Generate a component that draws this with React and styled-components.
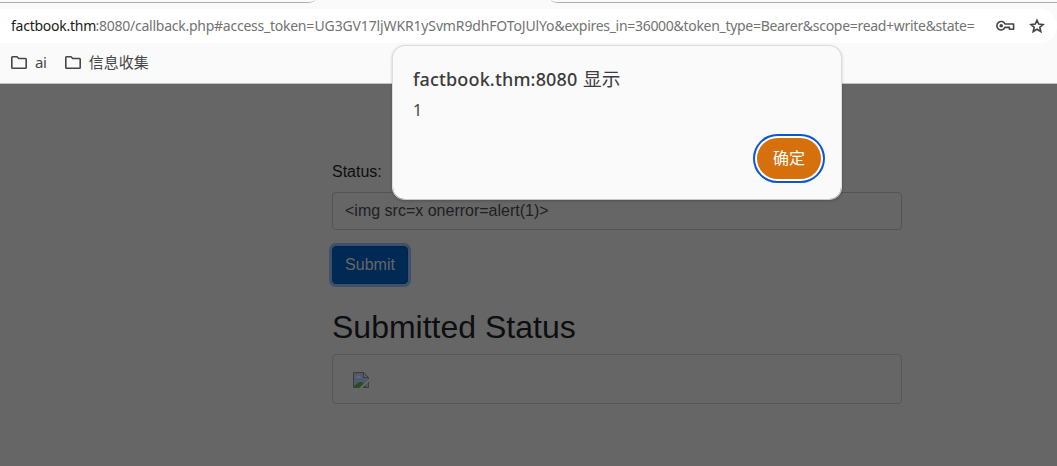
import React from "react";
import styled, { createGlobalStyle } from "styled-components";

const Global = createGlobalStyle`
  *, *::before, *::after { box-sizing: border-box; }
  body { margin: 0; overflow: hidden; }
`;

const uiFont = `"Noto Sans", "Noto Sans CJK SC", sans-serif`;

const Window = styled.div`
  position: relative;
  display: flex;
  flex-direction: column;
  width: 1057px;
  height: 466px;
  overflow: hidden;
  background: #fafafa;
  font-family: ${uiFont};
`;

const TabStrip = styled.div`
  display: flex;
  justify-content: space-between;
  flex: none;
  height: 9px;
`;

const TabEdge = styled.div`
  width: ${(p) => p.$width}px;
  height: 3px;
  border-bottom: 1px solid #adadad;
  border-radius: ${(p) => (p.$side === "left" ? "0 0 8px 0 / 0 0 3px 0" : "0 0 0 8px / 0 0 0 3px")};
`;

const AddressBar = styled.div`
  display: flex;
  align-items: center;
  flex: none;
  height: 34px;
  margin-left: -14px;
  padding: 0 12px 0 25px;
  border-radius: 17px;
  background: #fff;
`;

const Url = styled.div`
  display: flex;
  flex: 1;
  font-size: 14px;
  line-height: 20px;
  white-space: nowrap;
`;

const UrlPart = styled.span`
  flex: none;
  width: ${(p) => p.$width}px;
  color: ${(p) => (p.$host ? "#1b1b1b" : "#737373")};
  letter-spacing: ${(p) => p.$spacing}px;
`;

const BarIcon = styled.svg`
  flex: none;
  display: block;
  margin-left: ${(p) => p.$gap || 0}px;
`;

const Bookmarks = styled.div`
  display: flex;
  align-items: center;
  flex: none;
  gap: 18px;
  height: 41px;
  padding: 0 11px 2px;
  border-bottom: 1px solid #c4c4c4;
`;

const Bookmark = styled.div`
  display: flex;
  align-items: center;
  gap: 8px;
  color: #474747;
  font-size: 15px;
  line-height: 20px;
  letter-spacing: ${(p) => p.$spacing || 0}px;
`;

const Page = styled.main`
  flex: 1;
  padding: 76px 155px 0 332px;
  background: #666;
  color: #0d0e10;
  font-family: "Liberation Sans", sans-serif;
  font-size: 16px;
  line-height: 24px;
`;

const Form = styled.div`
  display: flex;
  flex-direction: column;
  align-items: flex-start;
`;

const Label = styled.label`
  margin-bottom: 8px;
`;

const Field = styled.div`
  width: 570px;
  height: 38px;
  padding: 6px 12px;
  border: 1px solid #525456;
  border-radius: 4px;
  color: #1d2022;
`;

const Submit = styled.button`
  width: 76px;
  height: 38px;
  margin: 16px 0 24px;
  padding: 6px 0;
  border: 1px solid #002549;
  border-radius: 4px;
  background: #002a54;
  box-shadow: 0 0 0 3px #3d526a;
  color: #666;
  font: inherit;
`;

const Heading = styled.h2`
  margin: 0 0 8px;
  font-size: 32px;
  font-weight: 400;
  line-height: 38px;
`;

const Result = styled.div`
  width: 570px;
  height: 50px;
  padding: 17px 20px;
  border: 1px solid #585858;
  border-radius: 4px;
`;

const Dialog = styled.section`
  position: absolute;
  left: 392px;
  top: 45px;
  display: flex;
  flex-direction: column;
  width: 450px;
  height: 155px;
  padding: 20px 20px;
  border: 1px solid #dedede;
  border-bottom-color: #c8c8c8;
  border-radius: 13px;
  background: #fafafa;
  background-clip: padding-box;
  box-shadow: 0 1px 3px rgba(0, 0, 0, 0.22);
`;

const DialogTitle = styled.div`
  display: flex;
  gap: 5px;
  color: #3c3c3c;
  font-size: 18px;
  line-height: 24px;
`;

const Origin = styled.span`
  width: 165px;
  padding-top: 1px;
  font-weight: 500;
  letter-spacing: ${(p) => p.$spacing}px;
  white-space: nowrap;
`;

const Verb = styled.span`
  font-family: "Noto Sans CJK SC", sans-serif;
  font-size: 18.7px;
  white-space: nowrap;
`;

const Message = styled.div`
  margin-top: 9px;
  color: #464646;
  font-size: 16px;
  line-height: 20px;
`;

const Confirm = styled.button`
  align-self: flex-end;
  flex: none;
  width: 64px;
  height: 41px;
  margin: 18px 0 0;
  padding: 0 0 3px;
  border: 0;
  border-radius: 20.5px;
  background: #d5700d;
  box-shadow: 0 0 0 2px #fff, 0 0 0 4px #0b57d0;
  color: #fff;
  font-family: "Noto Sans CJK SC", sans-serif;
  font-size: 16px;
`;

function FolderIcon() {
  return (
    <svg width="16" height="13" viewBox="0 0 16 13" fill="none" stroke="#474747" strokeWidth="1.6" strokeLinejoin="round">
      <path d="M.8 1.5Q.8.8 1.5.8H6l1.7 1.7h6.8q.7 0 .7.7v8.3q0 .7-.7.7h-13q-.7 0-.7-.7z" />
    </svg>
  );
}

function KeyIcon() {
  return (
    <BarIcon width="19" height="12" viewBox="0 0 19 12" fill="none" stroke="#454545" strokeWidth="1.6">
      <path d="M9 4H17.6V9.2H13.4V7.4H9A4.25 4.25 0 1 1 9 4z" strokeLinejoin="round" />
      <circle cx="5.2" cy="5.8" r="1.8" fill="#454545" stroke="none" />
    </BarIcon>
  );
}

function StarIcon() {
  return (
    <BarIcon $gap={14} width="16" height="16" viewBox="0 0 16 16" fill="none" stroke="#454545" strokeWidth="1.6">
      <path d="M8 2.2 9.7 6.1 14 6.5 10.8 9.3 11.8 13.5 8 11.2 4.2 13.5 5.2 9.3 2 6.5 6.3 6.1z" />
    </BarIcon>
  );
}

function BrokenImageIcon() {
  return (
    <svg width="16" height="16" viewBox="0 0 16 16" style={{ display: "block" }}>
      <path d="M.5.5H10.5L15.5 5.5V15.5H.5z" fill="#505969" />
      <path d="M2.5 5.5q0-1 1.2-1 .6-1.5 2-1 1.2 0 1.3 1.2 1.5 0 1.5 1.3H2.5z" fill="#666a70" />
      <path d="M1 15.5v-1Q5 9.7 8.2 10q2.7.4 5.3 5.5z" fill="#25501c" />
      <path d="M.5 15.5V.5H10.5L15.5 5.5M.5 15.5H15.5V5.5" fill="none" stroke="#3c3e3e" />
      <path d="M10.5.5v5h5z" fill="#606262" stroke="#3c3e3e" />
      <path d="M16 6.5v3L9.5 16H6.2z" fill="#666" />
    </svg>
  );
}

export default function App() {
  return (
    <Window>
      <Global />
      <TabStrip>
        <TabEdge $side="left" $width={315} />
        <TabEdge $side="right" $width={506} />
      </TabStrip>
      <AddressBar>
        <Url>
          <UrlPart $host $width={84.5} $spacing={-0.25}>factbook.thm</UrlPart>
          <UrlPart $width={219} $spacing={-0.25}>:8080/callback.php#access_token=</UrlPart>
          <UrlPart $width={240} $spacing={-0.14}>UG3GV17ljWKR1ySvmR9dhFOToJUlYo</UrlPart>
          <UrlPart $width={419} $spacing={-0.3}>&amp;expires_in=36000&amp;token_type=Bearer&amp;scope=read+write&amp;state=</UrlPart>
        </Url>
        <KeyIcon />
        <StarIcon />
      </AddressBar>
      <Bookmarks>
        <Bookmark $spacing={-0.3}><FolderIcon />ai</Bookmark>
        <Bookmark><FolderIcon />信息收集</Bookmark>
      </Bookmarks>
      <Page>
        <Form>
          <Label>Status:</Label>
          <Field>&lt;img src=x onerror=alert(1)&gt;</Field>
          <Submit>Submit</Submit>
        </Form>
        <Heading>Submitted Status</Heading>
        <Result><BrokenImageIcon /></Result>
      </Page>
      <Dialog>
        <DialogTitle>
          <Origin $spacing={0.15}>factbook.thm:8080</Origin>
          <Verb>显示</Verb>
        </DialogTitle>
        <Message>1</Message>
        <Confirm>确定</Confirm>
      </Dialog>
    </Window>
  );
}
